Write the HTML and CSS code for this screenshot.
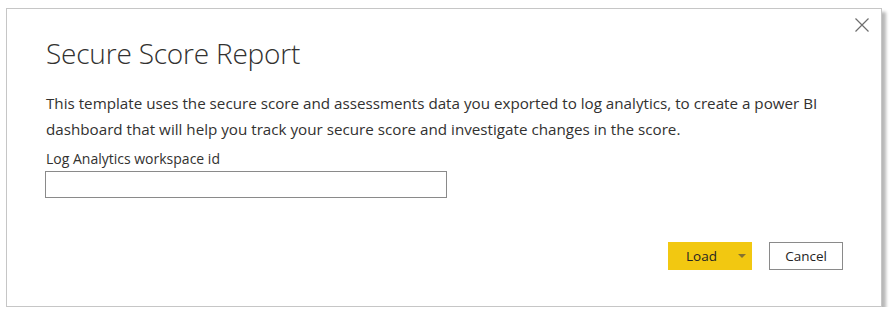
FILE: index.html
```html
<!DOCTYPE html>
<html>
<head>
<meta charset="utf-8">
<link rel="stylesheet" href="styles.css">
</head>
<body>
<div class="dialog">
  <button class="close" aria-label="Close">
    <svg width="14" height="14" viewBox="0 0 14 14"><path d="M0.5 0.5 L13.5 13.5 M13.5 0.5 L0.5 13.5" stroke="#6e6e6e" stroke-width="1.2" fill="none"/></svg>
  </button>
  <h1 class="title">Secure Score Report</h1>
  <p class="desc">This template uses the secure score and assessments data you exported to log analytics, to create a power BI dashboard that will help you track your secure score and investigate changes in the score.</p>
  <label class="label">Log Analytics workspace id</label>
  <input class="field" type="text">
  <div class="actions">
    <div class="load">
      <span class="load-text">Load</span>
      <span class="caret"></span>
    </div>
    <button class="cancel">Cancel</button>
  </div>
</div>
</body>
</html>
```
FILE: styles.css
```css
html, body {
  margin: 0;
  padding: 0;
  background: #ffffff;
}
body {
  padding: 8px 0 0 6px;
  font-family: "Open Sans", "Noto Sans", sans-serif;
  color: #252423;
}
.dialog {
  position: relative;
  box-sizing: border-box;
  width: 876px;
  height: 299px;
  border: 1px solid #c6c6c6;
  background: #fff;
  box-shadow: 4px 4px 3px rgba(0,0,0,0.28);
  padding: 0 0 0 39px;
  display: flex;
  flex-direction: column;
}
.close {
  position: absolute;
  top: 9px;
  right: 12px;
  border: 0;
  background: none;
  padding: 0;
  width: 14px;
  height: 14px;
}
.close svg { display: block; }
.title {
  margin: 24px 0 0 0;
  font-weight: 300;
  font-size: 28px;
  line-height: 40px;
  color: #323130;
  letter-spacing: -0.2px;
}
.desc {
  margin: 17px 0 0 0;
  font-size: 15.2px;
  line-height: 26px;
  width: 810px;
  color: #323130;
}
.label {
  margin-top: 7px;
  font-size: 14px;
  line-height: 20px;
  color: #323130;
}
.field {
  margin: 2px 0 0 -1px;
  box-sizing: border-box;
  width: 402px;
  height: 27px;
  border: 1px solid #8a8a8a;
  background: #fff;
}
.actions {
  display: flex;
  justify-content: flex-end;
  gap: 17px;
  margin: 44px 38px 0 0;
}
.load {
  box-sizing: border-box;
  width: 84px;
  height: 28px;
  background: #f2c811;
  display: flex;
  align-items: center;
  padding-left: 18px;
}
.load-text {
  font-size: 13.5px;
  color: #252423;
}
.caret {
  margin-left: 21px;
  width: 0;
  height: 0;
  border-left: 4px solid transparent;
  border-right: 4px solid transparent;
  border-top: 4px solid #857230;
}
.cancel {
  box-sizing: border-box;
  width: 74px;
  height: 28px;
  border: 1px solid #8a8a8a;
  background: #fff;
  font-family: "Open Sans", "Noto Sans", sans-serif;
  font-size: 13.5px;
  color: #252423;
  padding: 0;
}
```
